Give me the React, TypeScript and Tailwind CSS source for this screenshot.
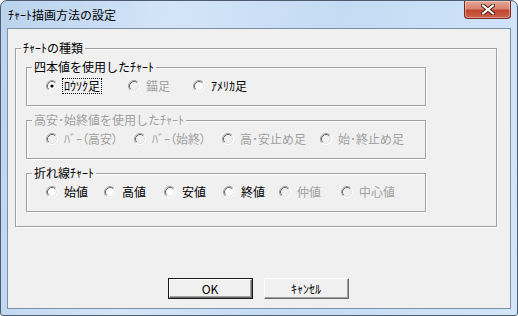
import React from "react";

type Item = { label: string; w: string; checked?: boolean; disabled?: boolean; focus?: boolean; palt?: boolean };

const CANDLE: Item[] = [
  { label: "ﾛｳｿｸ足", w: "w-[82px]", checked: true, focus: true },
  { label: "錨足", w: "w-[65px]", disabled: true },
  { label: "ｱﾒﾘｶ足", w: "" },
];

const BARS: Item[] = [
  { label: "ﾊﾞｰ（高安）", w: "w-[88px]", disabled: true, palt: true },
  { label: "ﾊﾞｰ（始終）", w: "w-[88px]", disabled: true, palt: true },
  { label: "高･安止め足", w: "w-[98px]", disabled: true },
  { label: "始･終止め足", w: "", disabled: true },
];

const LINES: Item[] = [
  { label: "始値", w: "w-[58px]" },
  { label: "高値", w: "w-[60px]" },
  { label: "安値", w: "w-[59px]" },
  { label: "終値", w: "w-[56px]" },
  { label: "仲値", w: "w-[62px]", disabled: true },
  { label: "中心値", w: "", disabled: true },
];

function RadioMark({ checked, disabled }: { checked?: boolean; disabled?: boolean }) {
  return (
    <svg width="12" height="12" viewBox="0 0 12 12" className="shrink-0">
      <circle cx="6" cy="6" r="4" fill={disabled ? "#f0f0f0" : "#ffffff"} />
      <path d="M2.11 9.89A5.5 5.5 0 0 1 9.89 2.11" stroke="#a0a0a0" fill="none" />
      <path d="M9.89 2.11A5.5 5.5 0 0 1 2.11 9.89" stroke="#ffffff" fill="none" />
      <path d="M2.82 9.18A4.5 4.5 0 0 1 9.18 2.82" stroke="#696969" fill="none" />
      <path d="M9.18 2.82A4.5 4.5 0 0 1 2.82 9.18" stroke="#e3e3e3" fill="none" />
      {checked && <circle cx="6" cy="6" r="1.6" fill={disabled ? "#a0a0a0" : "#000000"} />}
    </svg>
  );
}

function RadioRow({ items }: { items: Item[] }) {
  return (
    <div className="mt-[5px] mb-[12px] flex h-[14px] items-center pl-[19px]">
      {items.map((it) => (
        <div key={it.label} className={`flex shrink-0 items-center ${it.w}`}>
          <RadioMark checked={it.checked} disabled={it.disabled} />
          <span
            className={`ml-[4px] border border-dotted px-[1px] leading-[14px] whitespace-nowrap ${
              it.focus ? "border-black" : "border-transparent"
            } ${it.disabled ? "text-[#a0a0a0]" : "text-black"} ${it.palt ? "[font-feature-settings:'palt']" : ""}`}
          >
            {it.label}
          </span>
        </div>
      ))}
    </div>
  );
}

function Legend({ children, disabled }: { children: React.ReactNode; disabled?: boolean }) {
  return (
    <div
      className={`-mt-[8px] ml-[5px] w-fit bg-[#f0f0f0] px-[2px] leading-[14px] whitespace-nowrap ${
        disabled ? "text-[#a0a0a0]" : "text-black"
      }`}
    >
      {children}
    </div>
  );
}

function Button({ label, isDefault }: { label: string; isDefault?: boolean }) {
  return (
    <div className={`h-[21px] w-[85px] ${isDefault ? "border border-[#1a1a1a]" : ""}`}>
      <div className="flex h-full w-full items-center justify-center border border-t-white border-l-white border-r-[#696969] border-b-[#696969] bg-[#f0f0f0] leading-[14px] shadow-[inset_-1px_-1px_0_#a0a0a0]">
        {label}
      </div>
    </div>
  );
}

export default function App() {
  return (
    <div className="h-[316px] w-[518px] bg-white font-['Noto_Sans_CJK_JP','Noto_Sans_CJK_SC',sans-serif] text-[12px]">
      <div className="flex h-full w-full flex-col rounded-t-[7px] rounded-b-[3px] border border-[#4e5d6e] bg-[linear-gradient(100deg,#bad3ee_0%,#d3e5f8_30%,#c4dbf3_60%,#d2e6f9_100%)]">
        <div className="flex h-[27px] shrink-0 items-start justify-between">
          <div className="mt-[7px] ml-[7px] leading-[14px] text-black">ﾁｬｰﾄ描画方法の設定</div>
          <div className="mr-[6px] flex h-[18px] w-[47px] items-center justify-center rounded-b-[4px] border border-t-0 border-[#7a2a22] bg-[linear-gradient(180deg,#e8a493_0%,#d88470_45%,#c2452e_55%,#d0624c_100%)] shadow-[inset_0_0_0_1px_rgba(255,255,255,0.35)]">
            <svg width="14" height="11" viewBox="0 0 14 11">
              <path d="M2 1.5 L12 9.5 M12 1.5 L2 9.5" stroke="#4a1a14" strokeWidth="4" strokeLinecap="square" />
              <path d="M2 1.5 L12 9.5 M12 1.5 L2 9.5" stroke="#ffffff" strokeWidth="2" strokeLinecap="square" />
            </svg>
          </div>
        </div>
        <div className="mx-[6px] mb-[6px] flex flex-1 flex-col border border-[#7d90a8] bg-[#f0f0f0]">
          <div className="mt-[19px] ml-[7px] w-[482px] border border-[#a0a0a0] pb-[14px] shadow-[inset_1px_1px_0_#fff,1px_1px_0_#fff]">
            <Legend>ﾁｬｰﾄの種類</Legend>
            <div className="mt-[12px] ml-[10px] w-[400px] border border-[#a0a0a0] shadow-[inset_1px_1px_0_#fff,1px_1px_0_#fff]">
              <Legend>四本値を使用したﾁｬｰﾄ</Legend>
              <RadioRow items={CANDLE} />
            </div>
            <div className="mt-[14px] ml-[10px] w-[400px] border border-[#a0a0a0] shadow-[inset_1px_1px_0_#fff,1px_1px_0_#fff]">
              <Legend disabled>高安･始終値を使用したﾁｬｰﾄ</Legend>
              <RadioRow items={BARS} />
            </div>
            <div className="mt-[14px] ml-[10px] w-[400px] border border-[#a0a0a0] shadow-[inset_1px_1px_0_#fff,1px_1px_0_#fff]">
              <Legend>折れ線ﾁｬｰﾄ</Legend>
              <RadioRow items={LINES} />
            </div>
          </div>
          <div className="mt-auto mb-[9px] flex justify-center gap-[11px] pr-[2px]">
            <Button label="OK" isDefault />
            <Button label="ｷｬﾝｾﾙ" />
          </div>
        </div>
      </div>
    </div>
  );
}
